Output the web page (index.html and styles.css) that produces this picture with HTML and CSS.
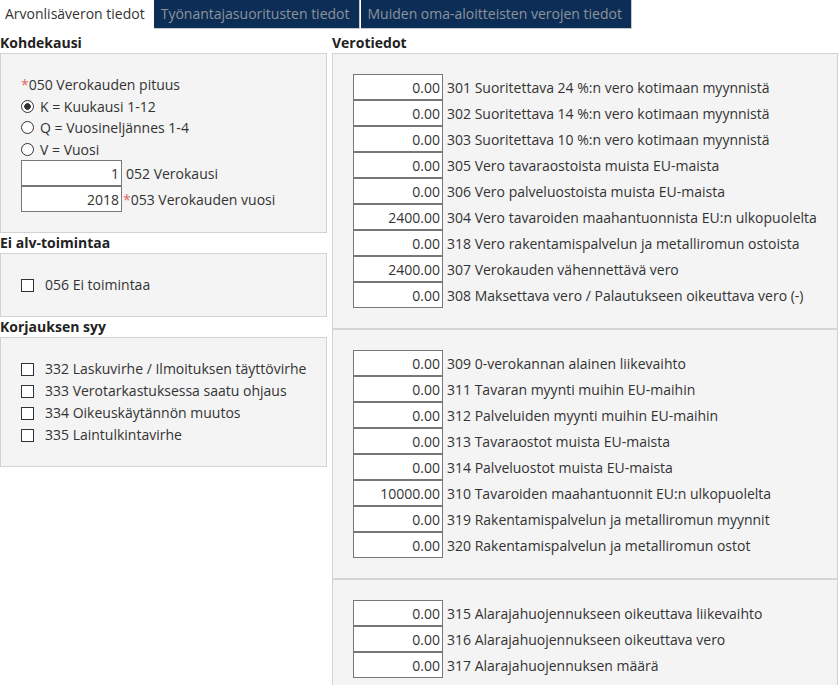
FILE: index.html
```html
<!DOCTYPE html>
<html lang="fi">
<head>
    <meta charset="UTF-8">
    <meta name="viewport" content="width=device-width, initial-scale=1.0">
    <title>Arvonlisäveron tiedot</title>
    <link rel="stylesheet" href="styles.css">
</head>
<body>
    <div class="tabs">
        <a class="tab active" href="#">Arvonlisäveron tiedot</a>
        <a class="tab" href="#">Työnantajasuoritusten tiedot</a>
        <a class="tab" href="#">Muiden oma-aloitteisten verojen tiedot</a>
    </div>

    <div class="columns">
        <div class="left">
            <h2>Kohdekausi</h2>
            <div class="panel">
                <div class="line"><span class="req">*</span>050 Verokauden pituus</div>
                <label class="line radio"><input type="radio" name="pituus" checked> K = Kuukausi 1-12</label>
                <label class="line radio"><input type="radio" name="pituus"> Q = Vuosineljännes 1-4</label>
                <label class="line radio"><input type="radio" name="pituus"> V = Vuosi</label>
                <div class="field wide">
                    <input type="text" value="1">
                    <span>052 Verokausi</span>
                </div>
                <div class="field wide">
                    <input type="text" value="2018">
                    <span class="tight"><span class="req">*</span>053 Verokauden vuosi</span>
                </div>
            </div>

            <h2>Ei alv-toimintaa</h2>
            <div class="panel">
                <label class="line check"><input type="checkbox"> 056 Ei toimintaa</label>
            </div>

            <h2>Korjauksen syy</h2>
            <div class="panel">
                <label class="line check"><input type="checkbox"> 332 Laskuvirhe / Ilmoituksen täyttövirhe</label>
                <label class="line check"><input type="checkbox"> 333 Verotarkastuksessa saatu ohjaus</label>
                <label class="line check"><input type="checkbox"> 334 Oikeuskäytännön muutos</label>
                <label class="line check"><input type="checkbox"> 335 Laintulkintavirhe</label>
            </div>
        </div>

        <div class="right">
            <h2>Verotiedot</h2>
            <div class="panel sections">
                <div class="section">
                    <div class="field"><input type="text" value="0.00"><span>301 Suoritettava 24 %:n vero kotimaan myynnistä</span></div>
                    <div class="field"><input type="text" value="0.00"><span>302 Suoritettava 14 %:n vero kotimaan myynnistä</span></div>
                    <div class="field"><input type="text" value="0.00"><span>303 Suoritettava 10 %:n vero kotimaan myynnistä</span></div>
                    <div class="field"><input type="text" value="0.00"><span>305 Vero tavaraostoista muista EU-maista</span></div>
                    <div class="field"><input type="text" value="0.00"><span>306 Vero palveluostoista muista EU-maista</span></div>
                    <div class="field"><input type="text" value="2400.00"><span>304 Vero tavaroiden maahantuonnista EU:n ulkopuolelta</span></div>
                    <div class="field"><input type="text" value="0.00"><span>318 Vero rakentamispalvelun ja metalliromun ostoista</span></div>
                    <div class="field"><input type="text" value="2400.00"><span>307 Verokauden vähennettävä vero</span></div>
                    <div class="field"><input type="text" value="0.00"><span>308 Maksettava vero / Palautukseen oikeuttava vero (-)</span></div>
                </div>
                <div class="section">
                    <div class="field"><input type="text" value="0.00"><span>309 0-verokannan alainen liikevaihto</span></div>
                    <div class="field"><input type="text" value="0.00"><span>311 Tavaran myynti muihin EU-maihin</span></div>
                    <div class="field"><input type="text" value="0.00"><span>312 Palveluiden myynti muihin EU-maihin</span></div>
                    <div class="field"><input type="text" value="0.00"><span>313 Tavaraostot muista EU-maista</span></div>
                    <div class="field"><input type="text" value="0.00"><span>314 Palveluostot muista EU-maista</span></div>
                    <div class="field"><input type="text" value="10000.00"><span>310 Tavaroiden maahantuonnit EU:n ulkopuolelta</span></div>
                    <div class="field"><input type="text" value="0.00"><span>319 Rakentamispalvelun ja metalliromun myynnit</span></div>
                    <div class="field"><input type="text" value="0.00"><span>320 Rakentamispalvelun ja metalliromun ostot</span></div>
                </div>
                <div class="section">
                    <div class="field"><input type="text" value="0.00"><span>315 Alarajahuojennukseen oikeuttava liikevaihto</span></div>
                    <div class="field"><input type="text" value="0.00"><span>316 Alarajahuojennukseen oikeuttava vero</span></div>
                    <div class="field"><input type="text" value="0.00"><span>317 Alarajahuojennuksen määrä</span></div>
                </div>
            </div>
        </div>
    </div>
</body>
</html>
```

FILE: styles.css
```css
body {
    font-family: 'Open Sans', 'Noto Sans', sans-serif;
    font-size: 14px;
    color: #333;
    margin: 0;
    padding: 0;
    background-color: #fff;
    width: 838px;
    overflow: hidden;
}

.tabs {
    display: flex;
    height: 29px;
}

.tab {
    display: block;
    box-sizing: border-box;
    height: 29px;
    line-height: 27px;
    padding: 0 9px 0 7px;
    text-decoration: none;
    white-space: nowrap;
    color: #8c939c;
    background-color: #0c2e56;
    border: 1px solid #c9c9c9;
    border-top: none;
    border-left: none;
    margin-right: 1px;
}

.tab.active {
    color: #333;
    background-color: #fff;
    border: none;
    padding: 0 8px 0 5px;
    line-height: 28px;
}

.columns {
    display: flex;
    gap: 5px;
    margin-top: 4px;
}

.left {
    width: 327px;
}

.right {
    width: 506px;
}

h2 {
    font-size: 14px;
    line-height: 20px;
    font-weight: 700;
    color: #222;
    margin: 0;
}

.panel {
    background-color: #f4f4f4;
    border: 1px solid #d2d2d2;
    padding: 20px;
}

.line {
    display: flex;
    align-items: center;
    line-height: 21.5px;
    height: 21.5px;
    white-space: nowrap;
}

.req {
    color: #e06666;
}

.radio input,
.check input {
    appearance: none;
    -webkit-appearance: none;
    width: 13px;
    height: 13px;
    margin: 0 7px 0 0;
    border: 1px solid #333;
    background-color: #fff;
    box-sizing: border-box;
    flex-shrink: 0;
}

.radio input {
    border-radius: 50%;
    margin-right: 6px;
}

.radio input:checked {
    background: radial-gradient(circle, #333 0, #333 3px, #fff 3.5px);
}

.check {
    height: 22px;
    line-height: 22px;
}

.check input {
    margin-right: 11px;
}

.field {
    display: flex;
    align-items: center;
    height: 26px;
    white-space: nowrap;
}

.field input {
    width: 90px;
    height: 26px;
    box-sizing: border-box;
    border: 1px solid #777;
    background-color: #fff;
    font-family: inherit;
    font-size: 14px;
    color: #333;
    text-align: right;
    padding: 0 2px 0 0;
    margin: 0 4px 0 0;
    flex-shrink: 0;
}

.field.wide input {
    width: 101px;
}

.field .tight {
    margin-left: -3px;
}

.sections {
    padding: 0;
}

.section {
    padding: 20px;
}

.section + .section {
    border-top: 2px solid #d6d6d6;
}
```
